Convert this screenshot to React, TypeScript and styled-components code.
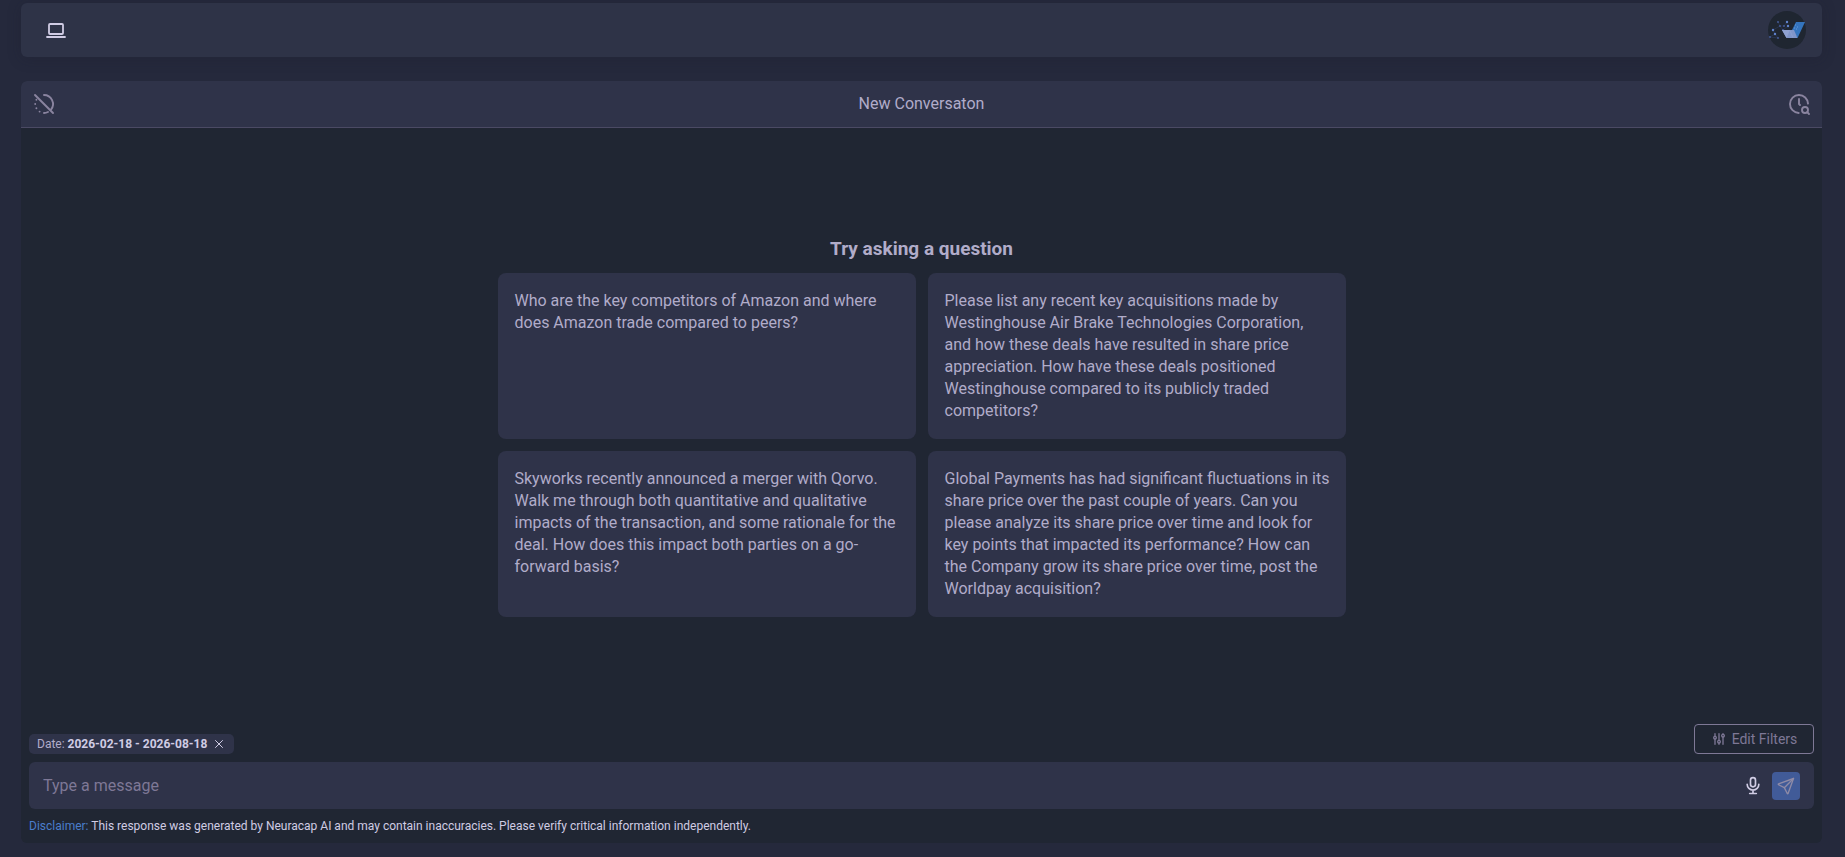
import React from 'react';
import styled, { createGlobalStyle } from 'styled-components';

const color = {
  page: '#25293c',
  surface: '#2f3349',
  topBar: '#2e3347',
  panel: '#202633',
  line: '#4b4a64',
  text: '#b1acc9',
  strong: '#d0cce4',
  muted: '#7e7896',
  link: '#4a7dcb',
  accent: '#415b98',
};

const GlobalStyle = createGlobalStyle`
  *, *::before, *::after { box-sizing: border-box; }
  body {
    margin: 0;
    background: ${color.page};
    color: ${color.text};
    font-family: Roboto, "Liberation Sans", sans-serif;
    font-size: 16px;
    line-height: 22px;
  }
  button, input { font: inherit; color: inherit; }
`;

const Page = styled.div`
  display: flex;
  flex-direction: column;
  gap: 24px;
  min-height: 100vh;
  padding: 3px 23px 14px 21px;
`;

const TopBar = styled.header`
  display: flex;
  align-items: center;
  justify-content: space-between;
  height: 54px;
  padding: 0 16px 0 23px;
  border-radius: 6px;
  background: ${color.topBar};
  box-shadow: 0 2px 14px rgba(28, 27, 42, 0.25);
`;

const IconButton = styled.button<{ $tone?: string }>`
  display: flex;
  align-items: center;
  justify-content: center;
  padding: 0;
  border: 0;
  background: none;
  color: ${(p) => p.$tone ?? color.strong};
  cursor: pointer;
`;

const Panel = styled.main`
  display: flex;
  flex: 1;
  flex-direction: column;
  border-radius: 6px;
  background: ${color.panel};
`;

const PanelHeader = styled.div`
  display: flex;
  align-items: center;
  justify-content: space-between;
  height: 47px;
  padding: 0 11px;
  border-bottom: 1px solid ${color.line};
  border-radius: 6px 6px 0 0;
  background: ${color.surface};
`;

const PanelTitle = styled.h1`
  margin: 0;
  font-size: 16px;
  font-weight: 400;
`;

const Welcome = styled.section`
  display: flex;
  flex: 1;
  flex-direction: column;
  align-items: center;
  justify-content: center;
  gap: 12px;
  padding-top: 2px;
`;

const WelcomeTitle = styled.h2`
  margin: 0;
  font-size: 19px;
  font-weight: 700;
  line-height: 24px;
`;

const Suggestions = styled.div`
  display: grid;
  grid-template-columns: 1fr 1fr;
  gap: 12px;
  width: 100%;
  max-width: 848px;
`;

const Suggestion = styled.button`
  display: flex;
  align-items: flex-start;
  padding: 17px 14px 17px 17px;
  border: 0;
  border-radius: 8px;
  background: ${color.surface};
  text-align: left;
  cursor: pointer;
`;

const Composer = styled.footer`
  display: flex;
  flex-direction: column;
  gap: 8px;
  padding: 0 8px 8px;
`;

const FilterRow = styled.div`
  display: flex;
  align-items: flex-end;
  justify-content: space-between;
`;

const Chip = styled.div`
  display: flex;
  align-items: center;
  gap: 6px;
  height: 20px;
  padding: 0 9px 0 8px;
  border-radius: 5px;
  background: ${color.surface};
  font-size: 12px;

  strong { color: ${color.strong}; }
`;

const EditFilters = styled.button`
  display: flex;
  align-items: center;
  justify-content: center;
  gap: 5px;
  width: 120px;
  height: 30px;
  padding: 0;
  border: 1px solid ${color.muted};
  border-radius: 4px;
  background: none;
  color: ${color.muted};
  font-size: 14px;
  cursor: pointer;
`;

const MessageBar = styled.form`
  display: flex;
  align-items: center;
  gap: 9px;
  height: 47px;
  padding: 0 14px;
  border-radius: 6px;
  background: ${color.surface};
`;

const MessageInput = styled.input`
  flex: 1;
  min-width: 0;
  padding: 0;
  border: 0;
  outline: 0;
  background: none;

  &::placeholder { color: ${color.muted}; opacity: 1; }
`;

const SendButton = styled.button`
  display: flex;
  align-items: center;
  justify-content: center;
  width: 28px;
  height: 28px;
  padding: 0;
  border: 0;
  border-radius: 4px;
  background: ${color.accent};
  color: #8f8ba6;
  cursor: pointer;
`;

const Disclaimer = styled.p`
  margin: 0;
  color: ${color.strong};
  font-size: 12px;
  line-height: 18px;

  span { color: ${color.link}; }
`;

type IconProps = { size?: number; weight?: number; children: React.ReactNode };

const Icon = ({ size = 24, weight = 2, children }: IconProps) => (
  <svg width={size} height={size} viewBox="0 0 24 24" fill="none" stroke="currentColor"
    strokeWidth={weight} strokeLinecap="round" strokeLinejoin="round" aria-hidden="true">
    {children}
  </svg>
);

const LaptopIcon = () => (
  <Icon weight={1.8}>
    <path d="M3 19h18" />
    <rect x="5" y="6" width="14" height="10" rx="1" />
  </Icon>
);

const HistoryOffIcon = () => (
  <Icon weight={1.9}>
    <path d="M12 3a9 9 0 0 1 7 14.600M16 20a9 9 0 0 1-4 1" />
    <path d="M4.400 7.700v.01M3.200 12v.01M4.400 16.200v.01M7.600 19.600v.01" />
    <path d="M3 3l18 18" />
  </Icon>
);

const ClockSearchIcon = () => (
  <Icon weight={1.9}>
    <path d="M20.993 11.646a9 9 0 1 0-9.318 9.348" />
    <path d="M12 7v5l1 1" />
    <circle cx="18" cy="18" r="3" />
    <path d="M20.200 20.200L22 22" />
  </Icon>
);

const SlidersIcon = () => (
  <Icon size={16}>
    <circle cx="6" cy="10" r="2" />
    <circle cx="12" cy="16" r="2" />
    <circle cx="18" cy="7" r="2" />
    <path d="M6 4v4M6 12v8M12 4v10M12 18v2M18 4v1M18 9v11" />
  </Icon>
);

const MicIcon = () => (
  <Icon size={20}>
    <rect x="9" y="2" width="6" height="11" rx="3" />
    <path d="M5 10a7 7 0 0 0 14 0M8 21h8M12 17v4" />
  </Icon>
);

const SendIcon = () => (
  <Icon size={20} weight={1.6}>
    <path d="M10 14L21 3" />
    <path d="M21 3l-6.500 18a.55.55 0 0 1-1 0L10 14l-7-3.500a.55.55 0 0 1 0-1L21 3" />
  </Icon>
);

const CloseIcon = () => (
  <Icon size={12}>
    <path d="M5 5l14 14M19 5L5 19" />
  </Icon>
);

const logoDots = [
  [10, 11], [19, 11], [12, 15], [16, 15], [20, 15],
  [15, 19], [5, 19], [7, 23], [2, 26], [10, 27],
];

const Logo = () => (
  <svg width="38" height="38" viewBox="0 0 38 38" aria-hidden="true">
    <circle cx="19" cy="19" r="19" fill="#1f2631" />
    <path d="M10 11l2 4 4 0 3-4M12 15l-7 4 2 4-5 3M7 23l3 4M15 19l-3-4M2 26l8 1M15 19l5-4"
      fill="none" stroke="#2c3858" strokeWidth=".7" />
    {logoDots.map(([x, y], i) => (
      <circle key={i} cx={x} cy={y} r={i % 3 === 1 || i === 6 ? 1.2 : 0.9} fill={i % 3 === 1 || i === 6 ? '#5f82cb' : '#465f9f'} />
    ))}
    <path d="M28 11H37l-7.500 16-5.500-8z" fill="#3474bd" />
    <path d="M14 19H26l3.500 8H18.500z" fill="#8095c9" />
    <path d="M22 19l-3.500 8L14 19z" fill="#90a2d2" />
    <path d="M22 20l3 6.500" stroke="#92a5d4" strokeWidth=".6" />
    <path d="M27 14h1M29 16h1M26 17h1M28 18h1" stroke="#6b9bd6" strokeWidth="1" />
  </svg>
);

const questions = [
  'Who are the key competitors of Amazon and where does Amazon trade compared to peers?',
  'Please list any recent key acquisitions made by Westinghouse Air Brake Technologies Corporation, and how these deals have resulted in share price appreciation. How have these deals positioned Westinghouse compared to its publicly traded competitors?',
  'Skyworks recently announced a merger with Qorvo. Walk me through both quantitative and qualitative impacts of the transaction, and some rationale for the deal. How does this impact both parties on a go-forward basis?',
  'Global Payments has had significant fluctuations in its share price over the past couple of years. Can you please analyze its share price over time and look for key points that impacted its performance? How can the Company grow its share price over time, post the Worldpay acquisition?',
];

export default function App() {
  return (
    <>
      <GlobalStyle />
      <Page>
        <TopBar>
          <IconButton type="button" aria-label="Display mode"><LaptopIcon /></IconButton>
          <IconButton type="button" aria-label="Account"><Logo /></IconButton>
        </TopBar>
        <Panel>
          <PanelHeader>
            <IconButton type="button" $tone="#8a849f" aria-label="Turn history off"><HistoryOffIcon /></IconButton>
            <PanelTitle>New Conversaton</PanelTitle>
            <IconButton type="button" $tone="#8a849f" aria-label="Search history"><ClockSearchIcon /></IconButton>
          </PanelHeader>
          <Welcome>
            <WelcomeTitle>Try asking a question</WelcomeTitle>
            <Suggestions>
              {questions.map((q) => <Suggestion type="button" key={q}>{q}</Suggestion>)}
            </Suggestions>
          </Welcome>
          <Composer>
            <FilterRow>
              <Chip>
                <span>Date: <strong>2026-02-18 - 2026-08-18</strong></span>
                <IconButton type="button" aria-label="Remove date filter"><CloseIcon /></IconButton>
              </Chip>
              <EditFilters type="button"><SlidersIcon />Edit Filters</EditFilters>
            </FilterRow>
            <MessageBar onSubmit={(e) => e.preventDefault()}>
              <MessageInput type="text" aria-label="Message" placeholder="Type a message" />
              <IconButton type="button" aria-label="Dictate"><MicIcon /></IconButton>
              <SendButton type="submit" aria-label="Send"><SendIcon /></SendButton>
            </MessageBar>
            <Disclaimer>
              <span>Disclaimer:</span> This response was generated by Neuracap AI and may contain inaccuracies. Please verify critical information independently.
            </Disclaimer>
          </Composer>
        </Panel>
      </Page>
    </>
  );
}
